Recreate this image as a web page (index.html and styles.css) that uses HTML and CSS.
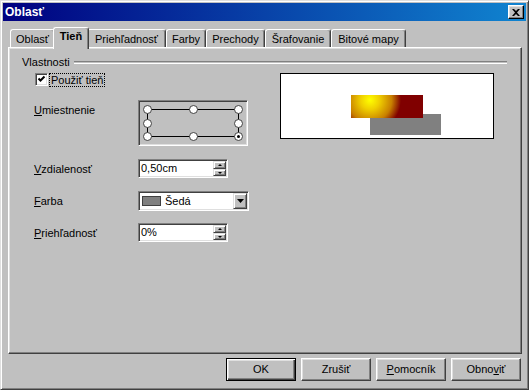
FILE: index.html
```html
<!DOCTYPE html>
<html lang="sk">
<head>
    <meta charset="UTF-8">
    <title>Oblasť</title>
    <link rel="stylesheet" href="styles.css">
</head>
<body>
    <div class="window">
        <div class="titlebar">
            <span class="title">Oblasť</span>
            <span class="close">
                <svg width="8" height="7" viewBox="0 0 8 7"><path d="M0 0h2l2 2 2-2h2L5 3.5 8 7H6L4 5 2 7H0l3-3.5z" fill="#000"/></svg>
            </span>
        </div>

        <div class="tabs">
            <div class="tab" style="width:45px">Oblasť</div>
            <div class="tab active" style="width:30px">Tieň</div>
            <div class="tab" style="width:79px">Priehľadnosť</div>
            <div class="tab" style="width:40px">Farby</div>
            <div class="tab" style="width:59px">Prechody</div>
            <div class="tab" style="width:66px">Šrafovanie</div>
            <div class="tab" style="width:75px">Bitové mapy</div>
        </div>

        <div class="panel">
            <div class="group-title">
                <span>Vlastnosti</span>
                <div class="etch"></div>
            </div>
            <div class="group-body">
                <div class="form">
                    <div class="check">
                        <span class="checkbox">
                            <svg width="9" height="9" viewBox="0 0 9 9"><path d="M1.5 3.5l2 2 4-4" stroke="#000" stroke-width="2" fill="none"/></svg>
                        </span>
                        <span class="focus">Použiť tieň</span>
                    </div>

                    <div class="row pos-row">
                        <span class="label"><u>U</u>miestnenie</span>
                        <div class="posbox">
                            <svg width="106" height="42" viewBox="0 0 106 42">
                                <g stroke="#000" stroke-width="1" fill="none">
                                    <path d="M7 7.5h92M7 34.5h92M7.5 7v28M98.5 7v28"/>
                                </g>
                                <g fill="#fff" stroke="#404040" stroke-width="1">
                                    <circle cx="7.5" cy="7.5" r="4"/>
                                    <circle cx="53.5" cy="7.5" r="4"/>
                                    <circle cx="98.5" cy="7.5" r="4"/>
                                    <circle cx="7.5" cy="21.5" r="4"/>
                                    <circle cx="98.5" cy="21.5" r="4"/>
                                    <circle cx="7.5" cy="34.5" r="4"/>
                                    <circle cx="53.5" cy="34.5" r="4"/>
                                    <circle cx="98.5" cy="34.5" r="4"/>
                                </g>
                                <circle cx="98.5" cy="34.5" r="1.5" fill="#000"/>
                            </svg>
                        </div>
                    </div>

                    <div class="row">
                        <span class="label"><u>V</u>zdialenosť</span>
                        <div class="spin">
                            <span class="value">0,50cm</span>
                            <span class="spin-btns"><span class="up"></span><span class="down"></span></span>
                        </div>
                    </div>

                    <div class="row row-combo">
                        <span class="label"><u>F</u>arba</span>
                        <div class="combo">
                            <span class="swatch"></span>
                            <span class="value">Šedá</span>
                            <span class="drop">
                                <svg width="7" height="4" viewBox="0 0 7 4"><path d="M0 0h7L3.5 4z" fill="#000"/></svg>
                            </span>
                        </div>
                    </div>

                    <div class="row row-last">
                        <span class="label"><u>P</u>riehľadnosť</span>
                        <div class="spin">
                            <span class="value">0%</span>
                            <span class="spin-btns"><span class="up"></span><span class="down"></span></span>
                        </div>
                    </div>
                </div>

                <div class="preview">
                    <svg width="212" height="64" viewBox="0 0 212 64">
                        <defs>
                            <radialGradient id="glow" gradientUnits="userSpaceOnUse" cx="89" cy="26" r="31">
                                <stop offset="0" stop-color="#ffff00"/>
                                <stop offset="0.3" stop-color="#f0d000"/>
                                <stop offset="0.7" stop-color="#c88000"/>
                                <stop offset="1" stop-color="#800000"/>
                            </radialGradient>
                        </defs>
                        <rect x="89" y="40" width="71" height="21" fill="#808080"/>
                        <rect x="70" y="21" width="72" height="23" fill="url(#glow)"/>
                    </svg>
                </div>
            </div>
        </div>

        <div class="buttons">
            <div class="btn default">OK</div>
            <div class="btn">Zrušiť</div>
            <div class="btn"><u>P</u>omocník</div>
            <div class="btn">Obno<u>v</u>iť</div>
        </div>
    </div>
</body>
</html>
```

FILE: styles.css
```css
body {
    margin: 0;
    font-family: "Liberation Sans", Arial, sans-serif;
    font-size: 11px;
    color: #000;
    background: #c0c0c0;
}
.window {
    width: 529px;
    height: 390px;
    box-sizing: border-box;
    padding: 2px;
    background: #c0c0c0;
    border-top: 1px solid #dfdfdf;
    border-left: 1px solid #dfdfdf;
    border-right: 1px solid #404040;
    border-bottom: 1px solid #404040;
    box-shadow: inset 1px 1px #fff, inset -1px -1px #808080;
    display: flex;
    flex-direction: column;
}
.titlebar {
    height: 18px;
    display: flex;
    align-items: center;
    justify-content: space-between;
    background: linear-gradient(to right, #000080, #1084d0);
    padding: 0 2px;
}
.title {
    color: #fff;
    font-weight: bold;
    font-size: 12px;
    line-height: 18px;
}
.close {
    width: 16px;
    height: 14px;
    box-sizing: border-box;
    background: #c0c0c0;
    border-top: 1px solid #fff;
    border-left: 1px solid #fff;
    border-right: 1px solid #000;
    border-bottom: 1px solid #000;
    box-shadow: inset -1px -1px #808080, inset 1px 1px #dfdfdf;
    display: flex;
    align-items: center;
    justify-content: center;
    padding-right: 1px;
}
.tabs {
    display: flex;
    height: 20px;
    margin-top: 6px;
    margin-left: 5px;
    padding-left: 2px;
}
.tab {
    box-sizing: border-box;
    height: 18px;
    margin-top: 2px;
    text-align: center;
    line-height: 16px;
    padding-top: 1px;
    border-top: 1px solid #fff;
    border-left: 1px solid #fff;
    border-right: 1px solid #404040;
    box-shadow: inset -1px 0 #808080;
    border-radius: 3px 3px 0 0;
    white-space: nowrap;
}
.tab.active {
    position: relative;
    z-index: 1;
    height: 21px;
    margin: 0 -2px -1px;
    padding: 0 2px;
    font-weight: bold;
    background: #c0c0c0;
    line-height: 17px;
    box-sizing: content-box;
}
.panel {
    height: 307px;
    box-sizing: border-box;
    margin-left: 5px;
    margin-right: 4px;
    padding: 8px 14px 0 13px;
    border-top: 1px solid #fff;
    border-left: 1px solid #fff;
    border-right: 1px solid #404040;
    border-bottom: 1px solid #404040;
    box-shadow: inset -1px -1px #808080, inset 1px 1px #dfdfdf;
}
.group-title {
    display: flex;
    align-items: center;
    height: 13px;
    line-height: 13px;
}
.etch {
    flex: 1;
    height: 1px;
    margin-left: 4px;
    border-top: 1px solid #808080;
    border-bottom: 1px solid #fff;
}
.group-body {
    display: flex;
    align-items: flex-start;
}
.form {
    flex: 1;
    padding-left: 12px;
}
.check {
    display: flex;
    align-items: center;
    height: 13px;
    margin-top: 4px;
    margin-left: 1px;
}
.checkbox {
    width: 13px;
    height: 13px;
    box-sizing: border-box;
    background: #fff;
    border-top: 1px solid #808080;
    border-left: 1px solid #808080;
    border-right: 1px solid #fff;
    border-bottom: 1px solid #fff;
    box-shadow: inset 1px 1px #404040, inset -1px -1px #dfdfdf;
    padding: 1px;
    display: flex;
}
.focus {
    margin-left: 2px;
    padding: 0 1px;
    line-height: 12px;
    outline: 1px dotted #000;
}
.row {
    display: flex;
    align-items: center;
    margin-top: 13px;
}
.label {
    width: 104px;
    flex: none;
}
.pos-row {
    align-items: flex-start;
    margin-top: 14px;
}
.pos-row .label {
    padding-top: 4px;
}
.row-last {
    margin-top: 12px;
}
.posbox {
    width: 110px;
    height: 46px;
    box-sizing: border-box;
    border-top: 1px solid #808080;
    border-left: 1px solid #808080;
    border-right: 1px solid #fff;
    border-bottom: 1px solid #fff;
    box-shadow: inset 1px 1px #404040, inset -1px -1px #dfdfdf;
    padding: 1px;
    display: flex;
}
.spin, .combo {
    box-sizing: border-box;
    background: #fff;
    border-top: 1px solid #808080;
    border-left: 1px solid #808080;
    border-right: 1px solid #fff;
    border-bottom: 1px solid #fff;
    box-shadow: inset 1px 1px #404040, inset -1px -1px #dfdfdf;
    padding: 1px;
    display: flex;
    align-items: center;
}
.spin {
    width: 90px;
    height: 19px;
}
.spin .value {
    flex: 1;
    padding-left: 1px;
    line-height: 15px;
}
.spin-btns {
    width: 13px;
    height: 15px;
    display: flex;
    flex-direction: column;
}
.up, .down, .drop {
    box-sizing: border-box;
    background: #c0c0c0;
    border-top: 1px solid #dfdfdf;
    border-left: 1px solid #dfdfdf;
    border-right: 1px solid #404040;
    border-bottom: 1px solid #404040;
    box-shadow: inset 1px 1px #fff, inset -1px -1px #808080;
    display: flex;
    align-items: center;
    justify-content: center;
}
.up {
    height: 8px;
}
.down {
    height: 7px;
}
.up::after, .down::after {
    content: "";
    border-left: 2px solid transparent;
    border-right: 2px solid transparent;
}
.up::after {
    border-bottom: 2px solid #000;
}
.down::after {
    border-top: 2px solid #000;
}
.combo {
    width: 111px;
    height: 20px;
    padding-left: 3px;
}
.swatch {
    width: 19px;
    height: 10px;
    box-sizing: border-box;
    background: #808080;
    border: 1px solid #404040;
}
.combo .value {
    flex: 1;
    padding-left: 4px;
}
.drop {
    width: 14px;
    height: 16px;
}
.preview {
    width: 214px;
    height: 66px;
    box-sizing: border-box;
    margin-top: 4px;
    margin-right: 13px;
    background: #fff;
    border: 1px solid #000;
    display: flex;
}
.buttons {
    display: flex;
    justify-content: flex-end;
    gap: 5px;
    margin-top: 4px;
    padding-right: 5px;
}
.btn {
    width: 70px;
    height: 23px;
    box-sizing: border-box;
    text-align: center;
    line-height: 21px;
    border-top: 1px solid #fff;
    border-left: 1px solid #fff;
    border-right: 1px solid #404040;
    border-bottom: 1px solid #404040;
    box-shadow: inset -1px -1px #808080, inset 1px 1px #dfdfdf;
}
.btn.default {
    border: 1px solid #000;
    box-shadow: inset 1px 1px #fff, inset -1px -1px #404040, inset -2px -2px #808080, inset 2px 2px #dfdfdf;
}
```
